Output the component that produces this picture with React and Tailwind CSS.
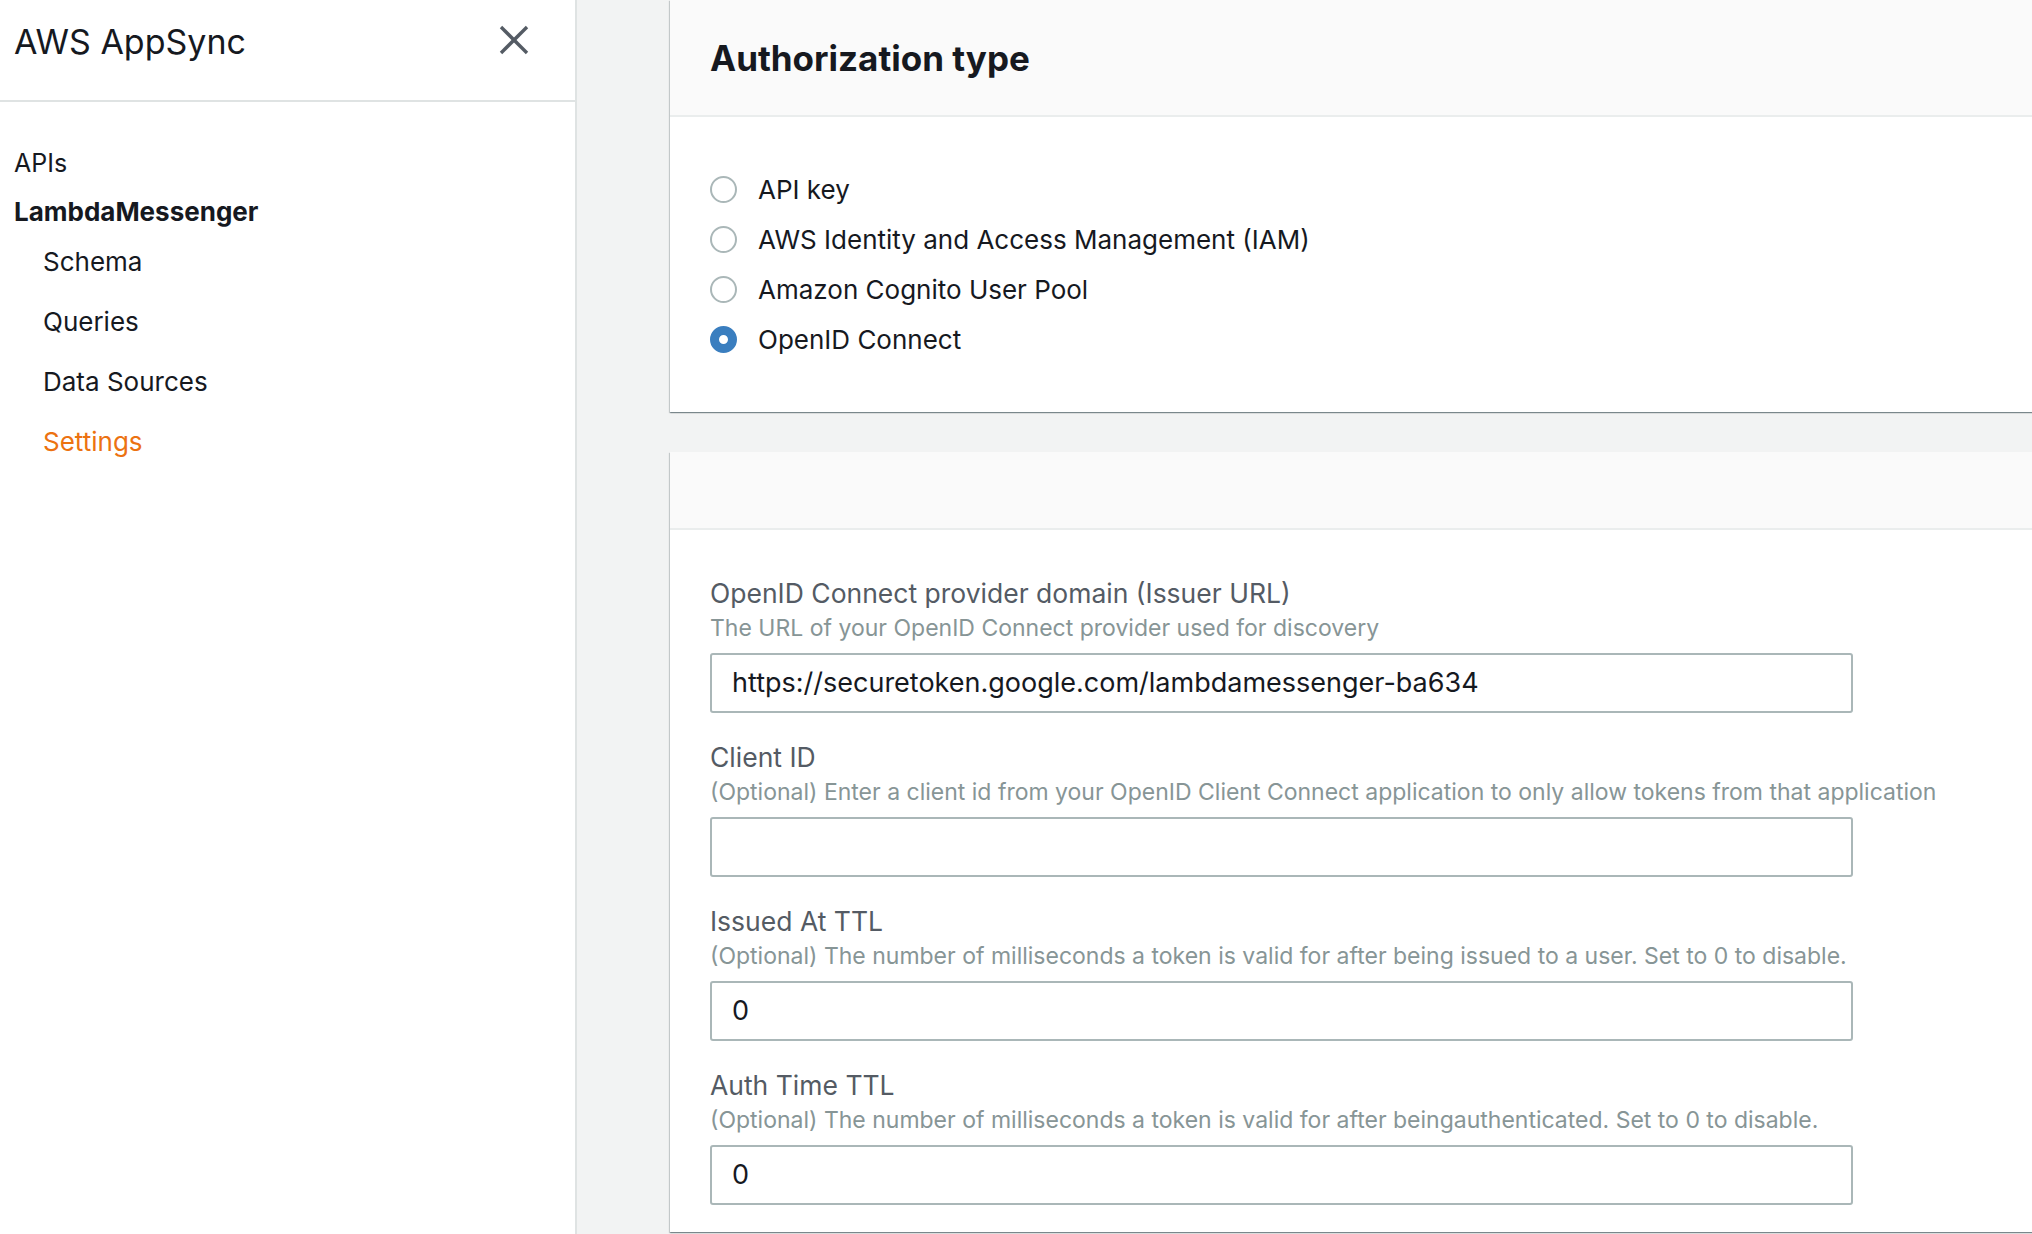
import React from 'react';

const navItems = [
  { label: 'Schema' },
  { label: 'Queries' },
  { label: 'Data Sources' },
  { label: 'Settings', active: true },
];

const authTypes = [
  'API key',
  'AWS Identity and Access Management (IAM)',
  'Amazon Cognito User Pool',
  'OpenID Connect',
];

const fields = [
  {
    label: 'OpenID Connect provider domain (Issuer URL)',
    hint: 'The URL of your OpenID Connect provider used for discovery',
    value: 'https://securetoken.google.com/lambdamessenger-ba634',
  },
  {
    label: 'Client ID',
    hint: '(Optional) Enter a client id from your OpenID Client Connect application to only allow tokens from that application',
    value: '',
  },
  {
    label: 'Issued At TTL',
    hint: '(Optional) The number of milliseconds a token is valid for after being issued to a user. Set to 0 to disable.',
    value: '0',
  },
  {
    label: 'Auth Time TTL',
    hint: '(Optional) The number of milliseconds a token is valid for after beingauthenticated. Set to 0 to disable.',
    value: '0',
  },
];

function Radio({ checked }) {
  if (checked) {
    return <span className="block h-[27px] w-[27px] shrink-0 rounded-full border-[9px] border-[#3a7ebf] bg-white" />;
  }
  return <span className="block h-[27px] w-[27px] shrink-0 rounded-full border-2 border-[#aab7b8] bg-white" />;
}

function Sidebar() {
  return (
    <aside className="w-[577px] shrink-0 border-r-2 border-[#dfe3e3] bg-white">
      <div className="flex h-[102px] items-start justify-between border-b-2 border-[#dfe3e3] pl-[14px] pr-[46px] pt-[21px]">
        <h1 className="text-[34px] leading-[42px] text-[#16191f]">AWS AppSync</h1>
        <button className="mt-[4px] text-[#545b64]">
          <svg width="30" height="30" viewBox="0 0 30 30" fill="none" stroke="currentColor" strokeWidth="3.4">
            <path d="M2 2 28 28" />
            <path d="M28 2 2 28" />
          </svg>
        </button>
      </div>
      <nav className="pt-[43px] text-[#16191f]">
        <div className="pl-[14px] text-[25px] leading-[36px]">APIs</div>
        <div className="mt-[13px] pl-[14px] text-[26px] font-bold leading-[36px]">LambdaMessenger</div>
        <ul className="mt-[2px]">
          {navItems.map((item) => (
            <li
              key={item.label}
              className={`h-[60px] pl-[43px] text-[26px] leading-[60px] ${item.active ? 'text-[#ec7211]' : ''}`}
            >
              {item.label}
            </li>
          ))}
        </ul>
      </nav>
    </aside>
  );
}

function Card({ title, children }) {
  return (
    <section className="w-[1420px] bg-white shadow-[0_1px_1px_0_rgba(0,28,36,0.3),1px_1px_1px_0_rgba(0,28,36,0.15),-1px_1px_1px_0_rgba(0,28,36,0.15)]">
      <header className={`flex items-center border-b-2 border-[#eaeded] bg-[#fafafa] px-[40px] ${title ? 'h-[117px]' : 'h-[78px]'}`}>
        {title && <h2 className="pt-[1px] text-[35px] font-bold text-[#16191f]">{title}</h2>}
      </header>
      {children}
    </section>
  );
}

export default function App() {
  return (
    <div className="flex h-[1234px] w-[2032px] overflow-hidden bg-[#f2f3f3] font-['Inter',sans-serif]">
      <Sidebar />
      <main className="flex min-w-0 flex-1 flex-col gap-[40px] overflow-hidden pl-[93px]">
        <Card title="Authorization type">
          <div className="flex flex-col px-[40px] pb-[48px] pt-[47px]">
            {authTypes.map((type, i) => (
              <label key={type} className="flex h-[50px] items-center gap-[21px] text-[26px] text-[#16191f]">
                <Radio checked={i === 3} />
                <span>{type}</span>
              </label>
            ))}
          </div>
        </Card>
        <Card>
          <div className="px-[40px] pt-[46px]">
            {fields.map((f) => (
              <div key={f.label} className="mb-[27px]">
                <div className="text-[26.5px] leading-[34px] text-[#545b64]">{f.label}</div>
                <div className="mt-[3px] text-[23px] leading-[30px] text-[#879596]">{f.hint}</div>
                <div className="mt-[10px] flex h-[60px] w-[1143px] items-center rounded-[3px] border-2 border-[#aab7b8] bg-white px-[20px] text-[27px] text-[#16191f]">
                  {f.value}
                </div>
              </div>
            ))}
          </div>
        </Card>
      </main>
    </div>
  );
}
